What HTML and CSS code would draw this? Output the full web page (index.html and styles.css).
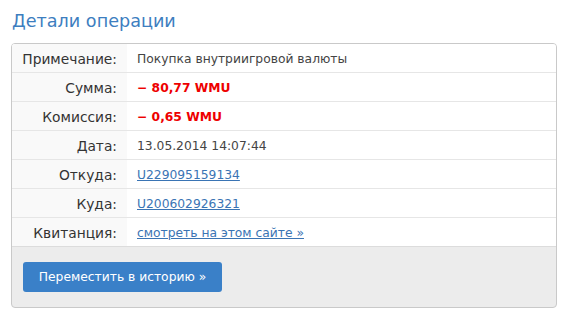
FILE: index.html
```html
<!DOCTYPE html>
<html lang="ru">
<head>
    <meta charset="UTF-8">
    <title>Детали операции</title>
    <link rel="stylesheet" href="styles.css">
</head>
<body>
<div class="page">
    <h1 class="title">Детали операции</h1>
    <div class="details">
        <table class="info">
            <tr><th>Примечание:</th><td>Покупка внутриигровой валюты</td></tr>
            <tr><th>Сумма:</th><td class="minus">&minus; 80,77 WMU</td></tr>
            <tr><th>Комиссия:</th><td class="minus">&minus; 0,65 WMU</td></tr>
            <tr><th>Дата:</th><td>13.05.2014 14:07:44</td></tr>
            <tr><th>Откуда:</th><td><a href="#">U229095159134</a></td></tr>
            <tr><th>Куда:</th><td><a href="#">U200602926321</a></td></tr>
            <tr><th>Квитанция:</th><td><a href="#">смотреть на этом сайте &raquo;</a></td></tr>
        </table>
        <div class="actions">
            <button class="btn">Переместить в историю &raquo;</button>
        </div>
    </div>
</div>
</body>
</html>
```

FILE: styles.css
```css
body{
    margin: 0;
    background: #fff;
    font-family: "DejaVu Sans", Verdana, sans-serif;
}
.page{
    padding: 0 10px 0 11px;
}
.title{
    margin: 0;
    padding: 11px 0 0 1px;
    height: 32px;
    font-size: 17.6px;
    font-weight: normal;
    color: #3d7ebf;
}
.details{
    border: 1px solid #c9c9c9;
    border-radius: 4px;
    overflow: hidden;
    height: 263px;
    background: #ececec;
}
.info{
    width: 100%;
    border-collapse: collapse;
    font-size: 12.3px;
    background: #fff;
}
.info th, .info td{
    height: 27px;
    padding: 1px 0 0;
    border-bottom: 1px solid #e6e6e6;
    vertical-align: middle;
}
.info th{
    width: 105px;
    padding-right: 10px;
    text-align: right;
    font-size: 13.8px;
    font-weight: normal;
    color: #333;
    background: #f9f9f9;
}
.info td{
    padding-left: 10px;
    color: #444;
}
.info tr:last-child th, .info tr:last-child td{
    border-bottom-color: #dcdcdc;
}
.info .minus{
    color: #e00;
    font-weight: bold;
}
.info a{
    color: #3a74b4;
}
.actions{
    padding: 15px 11px;
}
.btn{
    width: 199px;
    height: 30px;
    border: 0;
    border-radius: 3px;
    background: #3a80c8;
    color: #fff;
    font-family: inherit;
    font-size: 12.3px;
    padding: 0;
}
```
